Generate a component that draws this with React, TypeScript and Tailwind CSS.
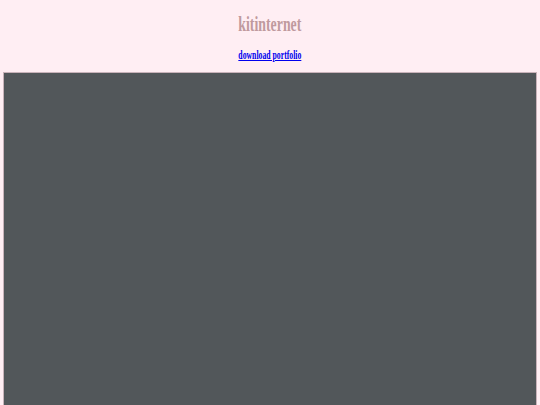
export default function App() {
  return (
    <div className="min-h-screen bg-[#ffeef3] font-['Liberation_Serif',serif]">
      <header className="flex flex-col items-center pt-[12px]">
        <h1 className="inline-block scale-x-[0.66] text-[21px] font-bold leading-[24px] text-[#c09a9e]">
          kitinternet
        </h1>
        <a
          href="#"
          className="mt-[12px] inline-block scale-x-[0.645] text-[12px] font-bold leading-[14px] text-[#0000ee] underline"
        >
          download portfolio
        </a>
      </header>
      <div className="mx-[3px] mt-[10px] h-[340px] border border-[#c9b3ba] bg-[#52575a]" />
    </div>
  );
}
